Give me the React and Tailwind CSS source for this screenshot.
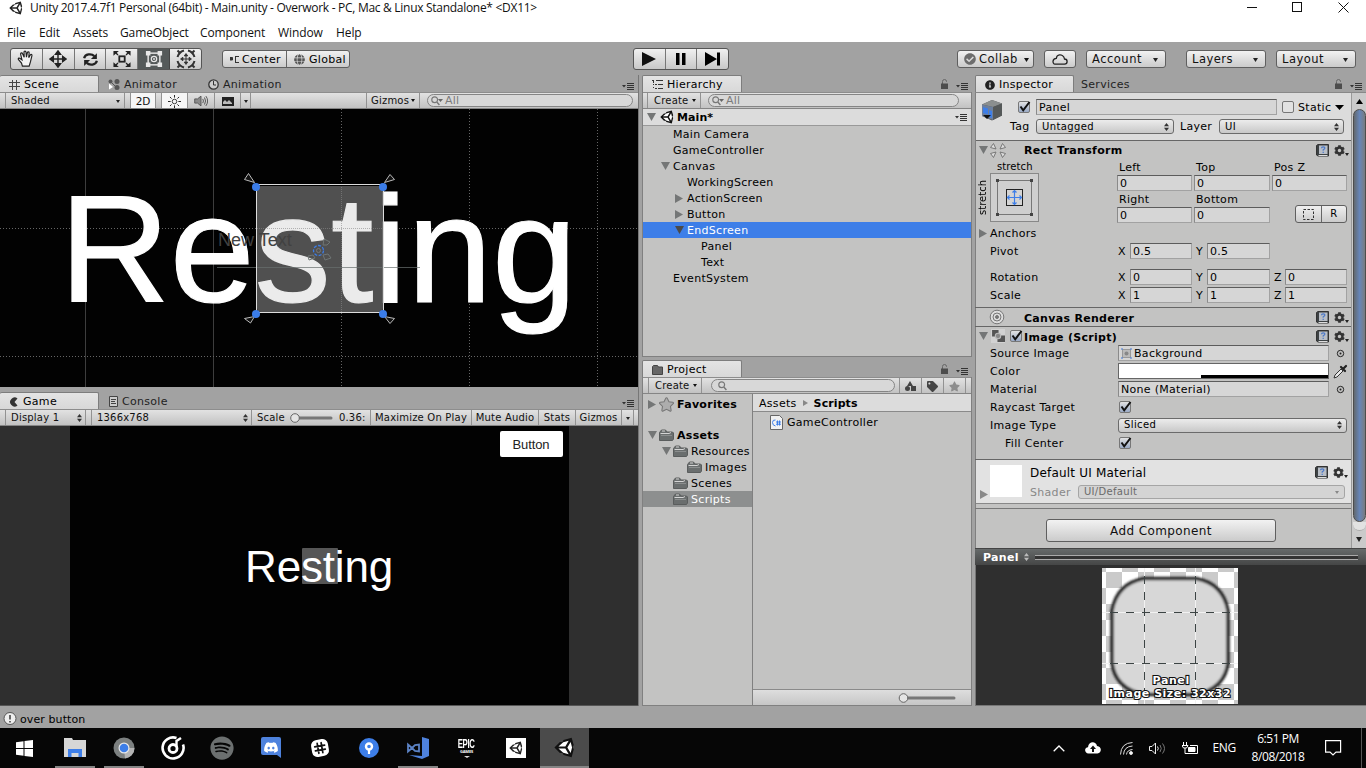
import React from "react";
import { FaSpotify, FaDiscord, FaStar, FaTag, FaCog, FaCheckCircle, FaInfoCircle, FaGlobe } from "react-icons/fa";

const Unity = ({ s = 14, className = "", inner = "#fff" }) => (
  <svg width={s} height={s} viewBox="0 0 24 25" className={"shrink-0 " + className}>
    <path fill="currentColor" d="M20.5 1 10.9 3.6 9.5 6.1H6.6L0 12.5 6.6 19h2.9l1.5 2.5 9.5 2.5 2.5-9.5-1.5-2.5L23 9.5z" />
    <path fill={inner} d="M4.8 11.2 10.5 6.2 17 4.6 13 11.2zM4.8 13.8l5.7 5 6.5 1.6-4-6.6zM19.3 6l1.7 6.5-1.7 6.5-3.9-6.5z" />
  </svg>
);
const Down = ({ className = "text-[#222]", w = 6, h = 4 }) => (
  <svg width={w} height={h} viewBox="0 0 6 4" preserveAspectRatio="none" className={"shrink-0 " + className}><path fill="currentColor" d="M0 0h6L3 4z" /></svg>
);
const Right = ({ className = "text-[#777]", w = 8, h = 9 }) => (
  <svg width={w} height={h} viewBox="0 0 8 9" preserveAspectRatio="none" className={"shrink-0 " + className}><path fill="currentColor" d="M0 0l8 4.5L0 9z" /></svg>
);
const Fold = ({ open, className = "text-[#747676]" }) => (open ? <Down w={9} h={8} className={className} /> : <Right className={className} />);
const UpDown = ({ className = "text-[#333]" }) => (
  <svg width="5" height="8" viewBox="0 0 5 8" className={"shrink-0 " + className}><path fill="currentColor" d="M0 3.200h5L2.500 0zM0 4.800h5L2.500 8z" /></svg>
);
const Lines = () => (
  <svg width="12" height="7" viewBox="0 0 12 7" className="shrink-0"><path fill="#333" d="M0 2h4L2 4.5zM5 0h7v1H5zM5 2h7v1H5zM5 4h7v1H5zM5 6h7v1H5z" /></svg>
);
const Folder = ({ w = 15, className = "" }) => (
  <svg width={w} height="12" viewBox="0 0 15 12" preserveAspectRatio="none" className={"shrink-0 " + className}>
    <path d="M.5 11.500v-8l2-2.500h4l1.500 2h5.500l1 1v6l-1 1.500z" fill="#6a6e6e" stroke="#5a5d5d" />
    <path d="M1.500 4.500h8.500l2-1M3 2h3" stroke="#d4d4d4" fill="none" /><path d="M2 6.500h11" stroke="#8a8d8d" />
  </svg>
);
const Search = ({ all }) => (
  <svg width="12" height="10" viewBox="0 0 12 10" className="shrink-0"><circle cx="3.7" cy="3.7" r="2.9" fill="none" stroke="#777" strokeWidth="1.2" /><path d="M5.8 6l2.6 3" stroke="#777" strokeWidth="1.4" />{all && <path d="M7 3h5l-2.5 3z" fill="#666" />}</svg>
);
const Svg = ({ s = 20, children, className = "" }) => <svg width={s} height={s} viewBox="0 0 20 20" fill="none" stroke="currentColor" className={"shrink-0 " + className}>{children}</svg>;
const Lock = () => (
  <svg width="7" height="10" viewBox="0 0 7 10" className="mr-px mb-px shrink-0"><path d="M1.500 5V2.500q0-2 2-2t2 2V3" fill="none" stroke="#666" /><path d="M0 4.500h7V10H0z" fill="#4d4d4d" /></svg>
);

const Tab = ({ icon, children, className = "" }) => (
  <div className={"flex h-[17px] items-center gap-[4px] rounded-t-[2px] border-t border-r border-[#7d7d7d] bg-linear-to-b from-[#e4e4e4] to-[#d8d8d8] pt-px pl-[9px] " + className}>{icon}<span>{children}</span></div>
);
const Ghost = ({ icon, children, className = "" }) => (
  <div className={"flex h-[17px] items-center gap-[4px] pt-[2px] text-[#222] " + className}>{icon}<span>{children}</span></div>
);
const Corner = ({ lock }) => (
  <div className="ml-auto flex items-end gap-[7px] pr-[4px] pb-[2px]">{lock && <Lock />}<Lines /></div>
);
const Bar = ({ children, className = "" }) => (
  <div className={"flex h-[17px] shrink-0 items-stretch border-t border-b border-t-[#8d8d8d] border-b-[#858585] bg-linear-to-b from-[#e2e2e2] to-[#c2c2c2] text-[10px] tracking-[0.2px] " + className}>{children}</div>
);
const Cell = ({ children, className = "" }) => <div className={"flex items-center border-r border-[#929292] pt-px whitespace-nowrap " + className}>{children}</div>;
const SearchBox = ({ all, className = "" }) => (
  <div className={"my-px flex items-center gap-[2px] rounded-full border border-[#858585] bg-[#d8d8d8] pl-[3px] text-[11px] text-[#7b7b7b] " + className}><Search all={all} />{all && "All"}</div>
);
const Btn = ({ children, className = "" }) => (
  <div className={"flex items-center rounded-[3px] border border-[#5f5f5f] bg-linear-to-b from-[#f2f2f2] to-[#cbcbcb] text-[#111] " + className}>{children}</div>
);
const Field = ({ children, className = "" }) => (
  <div className={"flex h-[16px] shrink-0 items-center border border-[#a2a2a2] border-t-[#5c5c5c] border-l-[#8a8a8a] bg-[#d6d6d6] pl-[2px] " + className}>{children}</div>
);
const Drop = ({ children, className = "" }) => (
  <div className={"flex h-[15px] shrink-0 items-center justify-between rounded-[3px] border border-[#6b6b6b] bg-linear-to-b from-[#ececec] to-[#c8c8c8] pr-[4px] pl-[5px] text-[10px] tracking-[0.4px] " + className}><span>{children}</span><UpDown /></div>
);
const Check = ({ off, className = "" }) => (
  <div className={"h-[12px] w-[12px] shrink-0 rounded-[2px] border border-[#777] bg-linear-to-b from-[#e2e2e2] " + (off ? "to-[#e2e2e2] " : "to-[#9aaac6] ") + className}>
    {!off && <svg width="12" height="11" viewBox="0 0 12 11" className="-mt-px"><path d="M1.5 5.5 4.2 9.300 10.500 1" fill="none" stroke="#111" strokeWidth="2" /></svg>}
  </div>
);
const BookGear = ({ className = "" }) => (
  <div className={"ml-auto flex items-center gap-[5px] " + className}>
    <svg width="13" height="13" viewBox="0 0 13 13"><path d="M.5 1.500 2 .5h10.500v11.500H2L.5 11z" fill="#3d4244" stroke="#333" /><rect x="3" y="1.500" width="8.500" height="8.500" fill="#b9bec6" /><path d="M5.500 4.200q0-1.400 1.700-1.400t1.700 1.300q0 1-1.700 1.700v1M7.200 7.800v1.200" fill="none" stroke="#4b79c9" strokeWidth="1.200" /><path d="M2.500 11.500h9" stroke="#ddd" /></svg>
    <div className="flex items-end"><FaCog size={11} className="text-[#333]" /><Down w={4} h={3} /></div>
  </div>
);

/* ---------- top ---------- */
const Title = () => (
  <header className="h-[42px] shrink-0 bg-white font-['Open_Sans',sans-serif] text-[12px] text-[#111]">
    <div className="flex h-[22px] items-start pt-px pl-[9px]">
      <Unity s={14} className="text-[#222]" />
      <span className="ml-[7px] -mt-px leading-[16px] whitespace-nowrap tracking-[-0.29px]">Unity 2017.4.7f1 Personal (64bit) - Main.unity - Overwork - PC, Mac &amp; Linux Standalone* &lt;DX11&gt;</span>
      <svg width="102" height="12" viewBox="0 0 102 12" className="mt-[1px] mr-[17px] ml-auto" fill="none" stroke="#111"><path d="M0 5.500h10M91.500 .5l10 10M101.500 .5l-10 10" /><rect x="45.500" y=".5" width="9" height="9" /></svg>
    </div>
    <nav className="flex items-center pt-px pl-[7px] leading-[20px] tracking-[-0.1px]">
      <span className="w-[32px]">File</span><span className="w-[34px]">Edit</span><span className="w-[47px]">Assets</span><span className="w-[80px]">GameObject</span><span className="w-[78px]">Component</span><span className="w-[58px]">Window</span><span>Help</span>
    </nav>
  </header>
);

const MoveP = "M10 3v14M3 10h14M10 1 7.200 4.800h5.600zM10 19 7.200 15.200h5.600zM1 10l3.800-2.800v5.600zM19 10l-3.800-2.800v5.600z";
const Toolbar = () => (
  <div className="flex h-[33px] shrink-0 items-start pt-[6px] pl-[10px]">
    <div className="flex h-[22px] w-[192px] overflow-hidden rounded-[3px] border border-[#555] bg-linear-to-b from-[#f0f0f0] to-[#c8c8c8] text-[#222]">
      <div className="flex flex-1 items-center justify-center border-r border-[#777]">
        <Svg s={18}><path fill="#f4f4f4" strokeWidth="1.300" d="M6 18 5 14.500 1.500 10.500c-.5-1.500 1-2 2-1L5.500 11 4 4.500c0-1.500 1.700-1.700 2.200-.3L8 8 7.800 2.500c0-1.600 2-1.600 2.200 0L10.500 8l1-5c.4-1.500 2.200-1.200 2 .3L13 8.500l1.800-3c.8-1.200 2.200-.4 1.800.8L15 13l-1.500 5z" /></Svg>
      </div>
      <div className="flex flex-1 items-center justify-center border-r border-[#777]"><Svg s={18}><path d={MoveP} strokeWidth="1.600" fill="currentColor" /></Svg></div>
      <div className="flex flex-1 items-center justify-center border-r border-[#777]"><Svg s={17}><path strokeWidth="2.600" d="M2.500 8.500C3.500 3.500 11 2.500 14.500 6M17.500 11.500C16.500 16.500 9 17.500 5.500 14" /><path fill="currentColor" stroke="none" d="M17.500 2.500v7h-7zM2.500 17.500v-7h7z" /></Svg></div>
      <div className="flex flex-1 items-center justify-center border-r border-[#777]"><Svg s={18}><rect x="7" y="7" width="6" height="6" strokeWidth="2" /><path strokeWidth="1.500" d="M5.500 5.500 2 2M14.500 5.500 18 2M5.500 14.500 2 18M14.500 14.500 18 18" /><path stroke="none" fill="currentColor" d="M.5 1v5.500L6.500 1zM19.500 1v5.500L13.500 1zM.5 19v-5.500L6.500 19zM19.500 19v-5.500L13.500 19z" /></Svg></div>
      <div className="flex flex-1 items-center justify-center border-r border-[#444] bg-[#555a5a] text-[#e8e8e8]"><Svg s={18}><rect x="3.500" y="3.500" width="13" height="13" strokeWidth="1.600" /><circle cx="10" cy="10" r="3" strokeWidth="1.300" /><circle cx="10" cy="10" r=".8" /><path fill="currentColor" stroke="none" d="M1 1h5v5H1zM14 1h5v5h-5zM1 14h5v5H1zM14 14h5v5h-5z" /></Svg></div>
      <div className="flex flex-1 items-center justify-center"><Svg s={20} className="text-[#333]"><path transform="translate(4 4) scale(.6)" d={MoveP} strokeWidth="1.600" fill="currentColor" /><path strokeWidth="2" d="M1.500 8Q3 3 8 1.500M12 1.500Q17 3 18.500 8M18.500 12Q17 17 12 18.500M8 18.500Q3 17 1.500 12" /><path strokeWidth="2" d="M4 4 1.500 1.500M16 4l2.500-2.500M4 16l-2.500 2.500M16 16l2.500 2.500" /></Svg></div>
    </div>
    <div className="mt-[2px] ml-[20px] flex h-[18px] w-[128px] rounded-[3px] border border-[#5f5f5f] bg-linear-to-b from-[#f0f0f0] to-[#cbcbcb]">
      <div className="flex w-[64px] items-center gap-[3px] border-r border-[#666] pl-[7px]"><svg width="9" height="7" viewBox="0 0 9 7"><path d="M0 1.500h2.500v2.500H0zM6 .5h3M6 6.500h3M5.500 0v7" fill="#333" stroke="#333" /></svg>Center</div>
      <div className="flex items-center gap-[4px] pl-[7px]"><FaGlobe size={11} className="text-[#555]" />Global</div>
    </div>
    <div className="ml-[283px] flex h-[22px] w-[96px] rounded-[3px] border border-[#555] bg-linear-to-b from-[#f0f0f0] to-[#c8c8c8] text-[#111]">
      <div className="flex flex-1 items-center justify-center border-r border-[#777]"><Right w={14} h={14} className="text-[#111]" /></div>
      <div className="flex flex-1 items-center justify-center border-r border-[#777]"><svg width="10" height="12"><path d="M0 0h3.500v12H0zM6 0h3.500v12H6z" /></svg></div>
      <div className="flex flex-1 items-center justify-center"><svg width="16" height="14"><path d="M0 0l12 7-12 7zM12 .5h3v13h-3z" /></svg></div>
    </div>
    <div className="mt-[2px] ml-[228px] flex text-[11.500px] leading-[13px] tracking-[0.5px]">
      <Btn className="h-[18px] w-[77px] gap-[3px] pt-px pl-[6px]"><FaCheckCircle size={12} className="mb-px text-[#6d6d6d]" />Collab<Down w={5} h={4} className="ml-[3px]" /></Btn>
      <Btn className="ml-[10px] h-[18px] w-[32px] justify-center"><svg width="16" height="11" viewBox="0 0 16 11"><path d="M3 10.200h9.500a2.600 2.600 0 0 0 0-5.200C12 2 9.500.6 7.500.8 5.500 1 4.500 2.500 4.300 4.300 0 4.500.3 10 3 10.200z" fill="none" stroke="#222" strokeWidth="1.300" /></svg></Btn>
      <Btn className="ml-[10px] h-[18px] w-[80px] justify-between pt-px pr-[7px] pl-[5px]">Account<Down w={5} h={4} /></Btn>
      <Btn className="ml-[20px] h-[18px] w-[80px] justify-between pt-px pr-[7px] pl-[5px]">Layers<Down w={5} h={4} /></Btn>
      <Btn className="ml-[10px] h-[18px] w-[80px] justify-between pt-px pr-[7px] pl-[5px]">Layout<Down w={5} h={4} /></Btn>
    </div>
  </div>
);

/* ---------- left column ---------- */
const SceneView = () => (
  <svg width="638" height="278" viewBox="0 109 638 278" className="block shrink-0 bg-[#020202] tracking-normal">
    <g stroke="#3d3d3d"><path d="M85.500 109v278M213.500 109v278" /><path strokeDasharray="1 2" stroke="#666" d="M341.500 109v278M469.500 109v278M597.500 109v278M0 228.500h638M0 356.500h638" /></g>
    <rect x="257" y="186" width="126" height="126" rx="4" fill="#575757" />
    <text x="59.500" y="302" fontSize="153" textLength="517.500" lengthAdjust="spacingAndGlyphs" fill="#fff" stroke="#fff" strokeWidth="1.200" fontFamily="Liberation Sans, Arial, sans-serif">Resting</text>
    <rect x="257" y="186" width="126" height="126" rx="4" fill="#000" opacity=".08" />
    <path d="M257 228.500h126M341.500 187v125" stroke="#8a8a8a" strokeDasharray="1 1" opacity=".6" />
    <path d="M217 267.500h203" stroke="#69706f" opacity=".7" />
    <text x="218" y="246" fontSize="18" fill="#414141" fontFamily="Liberation Sans, Arial, sans-serif">New Text</text>
    <rect x="256.500" y="184.500" width="127" height="128" fill="none" stroke="#ddd" />
    <g fill="#111" stroke="#bbb"><path d="M254.500 182.500l-10-3 4-6zM384.500 182.500l5.500-8 4.500 5zM254.500 316.500l-10 2 6 4.500zM384.500 316.500l10 2-4.500 5z" /></g>
    <g fill="#3b7de9"><circle cx="256" cy="187" r="4" /><circle cx="383" cy="187" r="4" /><circle cx="256" cy="314" r="4" /><circle cx="383" cy="314" r="4" /></g>
    <g fill="none"><circle cx="318.500" cy="250.500" r="5" stroke="#3b7de9" strokeWidth="1.300" strokeDasharray="3 1.500" /><circle cx="318.500" cy="250.500" r="2" stroke="#777" /><path stroke="#6f7675" d="M323 245l1-6 6 3-3 3zM323 255l5-1 3 4-6 2zM313 255l-5 1 1 4 6-2z" /></g>
  </svg>
);

const LeftCol = () => (
  <section className="flex w-[639px] flex-col border-r border-[#777]">
    <div className="flex h-[17px] items-end">
      <Tab className="w-[99px]" icon={<svg width="11" height="10"><path d="M3.500 0v10M7.500 0v10M0 2.500h11M0 6.500h11" stroke="#444" /></svg>}>Scene</Tab>
      <Ghost className="ml-[9px] w-[100px]" icon={<svg width="12" height="11" viewBox="0 0 12 11"><g fill="#555"><circle cx="2.500" cy="2.500" r="2" /><circle cx="9" cy="2.500" r="2.500" /><circle cx="9" cy="8.500" r="2.500" /></g><path d="M1 4.500v6l4-2.500z" fill="#fff" /><path d="M3 3l5 5" stroke="#555" /></svg>}>Animator</Ghost>
      <Ghost icon={<svg width="11" height="11"><circle cx="5.500" cy="5.500" r="4.700" fill="#ccc" stroke="#333" strokeWidth="1.300" /><path d="M5.500 2v4H8" fill="none" stroke="#333" /></svg>}>Animation</Ghost>
      <Corner />
    </div>
    <Bar className="text-[#111]">
      <Cell className="w-[6px]" />
      <Cell className="w-[119px] justify-between pr-[4px] pl-[5px]"><span>Shaded</span><Down w={4} h={3} /></Cell>
      <Cell className="w-[6px]" />
      <Cell className="w-[25px] justify-center bg-[#f6f6f6] text-[10.500px] tracking-[-0.1px]">2D</Cell>
      <Cell className="w-[6px]" />
      <Cell className="w-[26px] justify-center bg-[#f6f6f6]"><Svg s={13} className="text-[#222]"><circle cx="10" cy="10" r="3.500" fill="none" strokeWidth="1.300" /><path strokeWidth="1.500" d="M10 0v4M10 16v4M0 10h4M16 10h4M3 3l2.500 2.500M14.500 14.500 17 17M3 17l2.500-2.500M14.500 5.500 17 3" /></Svg></Cell>
      <Cell className="w-[27px] justify-center"><Svg s={14} className="text-[#555]"><path fill="#8a8a8a" strokeWidth="1.300" d="M1 7h4l5-4v14l-5-4H1z" /><path strokeWidth="1.400" d="M12.500 7q2 3 0 6M15 5q3 5 0 10M17 3q5 7 0 14" /></Svg></Cell>
      <Cell className="w-[26px] justify-center"><svg width="12" height="9"><path fill="#222" d="M0 0h12v9H0z" /><path fill="#bbb" d="M1 7V5l2-2 2 2 2-2 3 3v1z" /></svg></Cell>
      <Cell className="w-[10px] justify-center"><Down w={4} h={3} /></Cell>
      <div className="w-[115px]" />
      <Cell className="w-[54px] justify-between border-l pr-[4px] pl-[4px]"><span>Gizmos</span><Down w={4} h={3} className="mb-[2px]" /></Cell>
      <SearchBox all className="ml-[7px] w-[206px]" />
    </Bar>
    <SceneView />
    <div className="mt-[5px] flex h-[17px] shrink-0 items-end border-t border-t-[#a2a2a2]">
      <Tab className="w-[99px]" icon={<svg width="10" height="10"><path d="M8.500 1.500A4.500 4.500 0 1 0 8.500 8.500L5.500 5z" fill="#333" /></svg>}>Game</Tab>
      <Ghost className="ml-[10px]" icon={<svg width="9" height="11"><path d="M.5.500h8v10h-8zM2 3.500h5M2 5.500h4M2 7.500h5" fill="#ccc" stroke="#444" /></svg>}>Console</Ghost>
      <Corner />
    </div>
    <Bar className="text-[#111]">
      <Cell className="w-[6px]" />
      <Cell className="w-[80px] justify-between pr-[3px] pl-[5px]"><span>Display 1</span><UpDown /></Cell>
      <Cell className="w-[6px]" />
      <Cell className="w-[160px] justify-between pr-[3px] pl-[5px]"><span>1366x768</span><UpDown /></Cell>
      <Cell className="w-[119px] pt-[2px] pl-[5px]"><span>Scale</span><svg width="43" height="12" viewBox="0 0 43 12" className="ml-[5px]"><path d="M6 6h35" stroke="#777" strokeWidth="3" strokeLinecap="round" /><circle cx="5" cy="6" r="4.300" fill="#e4e4e4" stroke="#666" /></svg><span className="ml-[6px]">0.36:</span></Cell>
      <Cell className="w-[101px] justify-center">Maximize On Play</Cell>
      <Cell className="w-[67px] justify-center">Mute Audio</Cell>
      <Cell className="w-[37px] justify-center">Stats</Cell>
      <Cell className="w-[46px] justify-center">Gizmos</Cell>
      <Cell className="w-[12px] justify-center"><Down w={4} h={3} /></Cell>
    </Bar>
    <div className="flex h-[280px] justify-center border-b border-[#555] bg-[#2f2f2f]">
      <div className="relative w-[499px] bg-[#020202] font-['Liberation_Sans',Arial,sans-serif]">
        <div className="absolute top-[5px] left-[430px] flex h-[26px] w-[63px] items-center justify-center rounded-[2px] bg-white text-[13px] tracking-[-0.1px] text-[#222]">Button</div>
        <div className="absolute top-[122px] left-[232px] h-[36px] w-[36px] rounded-[1px] bg-[#565656]" />
        <div className="absolute top-[115px] left-[175.500px] text-[44px] leading-[51px] tracking-[-0.15px] text-white">Resting</div>
      </div>
    </div>
  </section>
);

/* ---------- middle column ---------- */
const Item = ({ pad, open, sel, children }) => (
  <div className={"flex h-[16px] items-center " + (sel ? "bg-[#3d7ee8] text-white " : "") + pad}>
    <div className="flex w-[12px] shrink-0">{open !== undefined && <Fold open={open} className={sel ? "text-[#4a4a4a]" : "text-[#747676]"} />}</div>
    <span>{children}</span>
  </div>
);
const Tree = ({ pad, open, sel, children, bold, icon }) => (
  <div className={"flex h-[16px] items-center whitespace-nowrap " + (sel ? "bg-[#8d8f8f] text-white " : "") + pad}>
    <div className="flex w-[11px] shrink-0">{open !== undefined && <Fold open={open} />}</div>
    {icon || <Folder />}
    <span className={bold ? "ml-[3px] font-bold" : "ml-[3px]"}>{children}</span>
  </div>
);

const MidCol = () => (
  <section className="ml-[3px] flex w-[330px] flex-col">
    <div className="flex h-[17px] items-end">
      <Tab className="w-[100px] border-l pl-[8px]" icon={<svg width="11" height="9"><path d="M0 .5h2M4 .5h7M3 4.500h2M6 4.500h5M3 8.500h2M6 8.500h5M1.500 1v2M1.500 4v1M1.500 7v1" stroke="#333" /></svg>}>Hierarchy</Tab>
      <Corner lock />
    </div>
    <div className="flex h-[265px] flex-col border-x border-b border-[#808080] bg-[#c3c3c2]">
      <Bar className="text-[#111]">
        <Cell className="w-[5px]" /><Cell className="w-[53px] justify-between pr-[4px] pl-[6px]"><span>Create</span><Down w={4} h={3} className="mb-[2px]" /></Cell>
        <SearchBox all className="ml-[7px] w-[251px]" />
      </Bar>
      <div className="flex h-[17px] items-center border-b border-[#999] bg-[#dcdcdc] pr-[4px] pl-[4px]"><Fold open /><Unity s={14} className="mr-[3px] ml-[4px] text-[#111]" /><b className="pt-px tracking-[0.1px]">Main*</b><div className="ml-auto"><Lines /></div></div>
      <Item pad="pl-[18px]">Main Camera</Item>
      <Item pad="pl-[18px]">GameController</Item>
      <Item pad="pl-[18px]" open>Canvas</Item>
      <Item pad="pl-[32px]">WorkingScreen</Item>
      <Item pad="pl-[32px]" open={false}>ActionScreen</Item>
      <Item pad="pl-[32px]" open={false}>Button</Item>
      <Item pad="pl-[32px]" open sel>EndScreen</Item>
      <Item pad="pl-[46px]">Panel</Item>
      <Item pad="pl-[46px]">Text</Item>
      <Item pad="pl-[18px]">EventSystem</Item>
    </div>
    <div className="mt-[3px] flex h-[17px] shrink-0 items-end">
      <Tab className="w-[100px] border-l pl-[8px]" icon={<svg width="11" height="10"><path d="M.5 9.500v-8l1-1h4l1 1.500h4v7.500z" fill="#666" stroke="#444" /></svg>}>Project</Tab>
      <Corner lock />
    </div>
    <div className="flex h-[329px] flex-col border-x border-b border-[#808080]">
      <Bar className="text-[#111]">
        <Cell className="w-[6px]" /><Cell className="w-[53px] justify-between pr-[4px] pl-[6px]"><span>Create</span><Down w={4} h={3} className="mb-[2px]" /></Cell>
        <SearchBox className="ml-[9px] w-[184px] pl-[6px]" />
        <Cell className="w-[5px]" />
        <Cell className="w-[22px] justify-center"><svg width="11" height="10" fill="#444"><path d="M5 0l3 5H2z" /><circle cx="2.500" cy="7.500" r="2.500" /><path d="M6 5h5v5H6z" /></svg></Cell>
        <Cell className="w-[22px] justify-center"><FaTag size={11} className="text-[#444]" /></Cell>
        <Cell className="w-[22px] justify-center"><FaStar size={11} className="text-[#8c8c8c]" /></Cell>
      </Bar>
      <div className="flex min-h-0 flex-1">
        <div className="w-[110px] shrink-0 overflow-hidden border-r border-[#808080] bg-[#c3c3c2] pt-[2px]">
          <Tree pad="pl-[5px]" open={false} bold icon={<FaStar size={15} className="text-[#adadad]" stroke="#777" strokeWidth="40" />}>Favorites</Tree>
          <div className="h-[15px]" />
          <Tree pad="pl-[5px]" open bold>Assets</Tree>
          <Tree pad="pl-[19px]" open>Resources</Tree>
          <Tree pad="pl-[33px]">Images</Tree>
          <Tree pad="pl-[19px]">Scenes</Tree>
          <Tree pad="pl-[19px]" sel>Scripts</Tree>
        </div>
        <div className="flex flex-1 flex-col bg-[#c3c3c2]">
          <div className="flex h-[18px] shrink-0 items-center gap-[6px] border-b border-[#8a8a8a] bg-[#dcdcdc] pt-px pl-[6px]"><span>Assets</span><Right w={5} h={6} className="text-[#888]" /><b className="tracking-[0.1px]">Scripts</b></div>
          <div className="mt-[2px] flex h-[16px] items-center gap-[4px] pl-[17px]"><svg width="13" height="15" viewBox="0 0 13 15"><path d="M.5.500h9l3 3v11H.5z" fill="#f1f1f1" stroke="#666" /><path d="M5.500 5Q2.500 4.500 2.500 7.500T5.500 11M7.500 5.500v5M9.500 5.500v5M6 7h5M6 9.200h5" stroke="#3d7ee8" fill="none" /></svg>GameController</div>
          <div className="mt-auto flex h-[16px] items-center border-t border-[#8a8a8a] bg-linear-to-b from-[#dedede] to-[#c6c6c6]"><svg width="58" height="12" className="ml-auto mr-[15px]"><path d="M6 6h50" stroke="#777" strokeWidth="3" strokeLinecap="round" /><circle cx="5.500" cy="6" r="4.300" fill="#e4e4e4" stroke="#666" /></svg></div>
        </div>
      </div>
    </div>
  </section>
);

/* ---------- inspector ---------- */
const Vec = ({ label, v }) => (
  <div className="flex h-[18px] items-center">
    <span className="w-[142px] pl-[15px]">{label}</span>
    <span className="w-[13px] pl-px">X</span><Field className="w-[62px]">{v[0]}</Field>
    <span className="w-[15px] pl-[4px]">Y</span><Field className="w-[63px]">{v[1]}</Field>
    {v[2] && <><span className="w-[15px] pl-[4px]">Z</span><Field className="w-[62px]">{v[2]}</Field></>}
  </div>
);
const Prop = ({ label, children, pad = "pl-[15px]" }) => (
  <div className="flex h-[18px] items-center"><span className={"w-[143px] shrink-0 " + pad}>{label}</span>{children}</div>
);
const Target = () => <svg width="9" height="9" className="ml-[7px]"><circle cx="4.500" cy="4.500" r="3.200" fill="none" stroke="#222" /><circle cx="4.500" cy="4.500" r="1" fill="#222" /></svg>;

const Inspector = () => (
  <section className="ml-[3px] flex flex-1 flex-col">
    <div className="flex h-[17px] items-end">
      <Tab className="w-[99px] border-l pl-[8px]" icon={<FaInfoCircle size={10} className="text-[#222]" />}>Inspector</Tab>
      <Ghost className="ml-[7px]">Services</Ghost>
      <Corner lock />
    </div>
    <div className="flex h-[456px] shrink-0 border-t border-[#888]">
      <div className="w-[376px] bg-[#c3c3c2] shadow-[inset_1px_0_0_#808080]">
        <div className="ml-px h-[48px] border-b border-[#666] bg-[#dcdcdc] pt-[6px]">
          <div className="flex h-[16px] items-center">
            <svg width="24" height="26" viewBox="0 0 24 26" className="mt-[8px] mr-[13px] ml-[5px] shrink-0"><path d="M11 2 21 5.500v12l-10 5L1 18V6.500z" fill="#555" /><path d="M11 2 21 5.500l-9 3.500L1 6.500z" fill="#8b8f8f" /><path d="M1 6.500 12 9v13L1 18z" fill="#6d7f9c" /><path d="M2 9l5 1.500v6L2 15zM8 12l3 1v7l-3-1z" fill="#3d7ee8" /><path d="M12 9l9-3.500v12L12 22z" fill="#555959" /><path d="M2 17h8l-4 4z" fill="#111" /></svg>
            <Check />
            <Field className="ml-[6px] w-[241px]">Panel</Field>
            <Check off className="ml-[5px]" /><span className="ml-[4px]">Static</span><Down w={9} h={5} className="ml-[4px]" />
          </div>
          <div className="mt-[4px] flex h-[15px] items-center"><span className="w-[60px] pl-[34px]">Tag</span><Drop className="w-[138px]">Untagged</Drop><span className="w-[45px] pl-[6px]">Layer</span><Drop className="w-[125px]">UI</Drop></div>
        </div>
        <div className="h-[167px] border-b border-[#666]">
          <div className="flex h-[18px] items-center pr-[2px] pl-[4px]"><Fold open /><svg width="18" height="17" viewBox="0 0 18 17" className="ml-[1px]" fill="#ddd" stroke="#777"><path d="M7 7 1.500 5.500 4.500 1.500zM11 7l5.500-1.500-3-4zM7 10l-5.500 1.500 3 4zM11 10l5.500 1.500-3 4z" strokeLinejoin="round" /></svg><b className="ml-[17px] pt-px">Rect Transform</b><BookGear /></div>
          <div className="flex h-[64px]">
            <div className="w-[142px]">
              <div className="h-[14px] pt-px pl-[22px] text-[10px] leading-[14px] tracking-[0.1px]">stretch</div>
              <div className="flex">
                <div className="flex w-[15px] items-center justify-center pl-px text-[10px] tracking-normal"><span className="rotate-180 [writing-mode:vertical-rl]">stretch</span></div>
                <svg width="49" height="49" viewBox="0 0 49 49"><rect x=".5" y=".5" width="48" height="48" fill="#cfcfcf" stroke="#888" /><rect x="7.500" y="7.500" width="34" height="34" fill="none" stroke="#777" /><path fill="#444" d="M6 6h3v3H6zM40 6h3v3h-3zM6 40h3v3H6zM40 40h3v3h-3z" /><rect x="16.500" y="16.500" width="16" height="16" fill="#d4d4d4" stroke="#222" /><path d="M24.500 18v13M18 24.500h13M22.500 19.500l2-2 2 2M22.500 29.500l2 2 2-2M19.500 22.500l-2 2 2 2M29.500 22.500l2 2-2 2" stroke="#3d7ee8" fill="none" strokeWidth="1.200" /></svg>
              </div>
            </div>
            <div className="flex flex-col">
              <div className="flex h-[16px] items-center"><span className="w-[77px] pl-[2px]">Left</span><span className="w-[78px] pl-[2px]">Top</span><span className="pl-[2px]">Pos Z</span></div>
              <div className="flex gap-[2px]"><Field className="w-[75px]">0</Field><Field className="w-[76px]">0</Field><Field className="w-[75px]">0</Field></div>
              <div className="flex h-[16px] items-center"><span className="w-[77px] pl-[2px]">Right</span><span className="pl-[2px]">Bottom</span></div>
              <div className="flex gap-[2px]"><Field className="w-[75px]">0</Field><Field className="w-[76px]">0</Field>
                <div className="-mt-[2px] ml-[23px] flex h-[18px] w-[52px] rounded-[3px] border border-[#5f5f5f] bg-linear-to-b from-[#f0f0f0] to-[#cbcbcb] text-[10px]"><div className="flex flex-1 items-center justify-center border-r border-[#666]"><svg width="11" height="11"><rect x=".5" y=".5" width="10" height="10" fill="none" stroke="#333" strokeDasharray="2.500 1.500" /></svg></div><div className="flex flex-1 items-center justify-center">R</div></div>
              </div>
            </div>
          </div>
          <div className="mt-px flex h-[18px] items-center pl-[4px]"><Fold open={false} /><span className="ml-[3px]">Anchors</span></div>
          <Vec label="Pivot" v={["0.5", "0.5"]} />
          <div className="h-[8px]" />
          <Vec label="Rotation" v={["0", "0", "0"]} />
          <Vec label="Scale" v={["1", "1", "1"]} />
        </div>
        <div className="flex h-[19px] items-center border-b border-[#666] pr-[2px] pl-[14px]"><svg width="16" height="16" fill="none" stroke="#777"><circle cx="8" cy="8" r="6.800" fill="#ddd" /><circle cx="8" cy="8" r="4" /><circle cx="8" cy="8" r="1.500" fill="#777" /></svg><b className="ml-[19px] pt-[2px]">Canvas Renderer</b><BookGear /></div>
        <div className="h-[133px] border-b border-[#666]">
          <div className="flex h-[17px] items-center pt-px pr-[2px] pl-[4px]"><Fold open /><svg width="14" height="14" viewBox="0 0 13 13" className="ml-[3px]"><rect width="13" height="13" fill="#d2d2d2" /><path d="M1 1h6v6H1zM6 6h7v6H6z" fill="#555" /><circle cx="6.500" cy="6.500" r="2.500" fill="#888" stroke="#bbb" /></svg><Check className="ml-[5px]" /><b className="ml-[2px] pt-[2px]">Image (Script)</b><BookGear /></div>
          <Prop label="Source Image"><Field className="w-[211px]"><svg width="11" height="11" className="mr-[2px]"><rect x="1.500" y="1.500" width="8" height="8" fill="#bbb" stroke="#999" /><path fill="#5a87d6" d="M0 0h2v2H0zM9 0h2v2H9zM0 9h2v2H0zM9 9h2v2H9z" opacity=".6" /><circle cx="5.500" cy="5.500" r="2" fill="#888" /></svg>Background</Field><Target /></Prop>
          <Prop label="Color"><div className="flex h-[16px] w-[211px] flex-col justify-end border border-[#666] bg-white"><div className="ml-[82px] h-[3px] bg-black" /></div><svg width="15" height="15" viewBox="0 0 15 15" className="ml-[4px]"><path d="M1 14l1-3 6-6 2 2-6 6z" fill="#e8e8e8" stroke="#333" /><path d="M8 3l4 4M10 5l3-3" stroke="#222" strokeWidth="2.200" strokeLinecap="round" /></svg></Prop>
          <Prop label="Material"><Field className="w-[211px]">None (Material)</Field><Target /></Prop>
          <Prop label="Raycast Target"><Check className="ml-px" /></Prop>
          <Prop label="Image Type"><Drop className="w-[229px]">Sliced</Drop></Prop>
          <Prop label="Fill Center" pad="pl-[30px]"><Check className="ml-px" /></Prop>
        </div>
        <div className="ml-px flex h-[44px] border-b border-[#888] bg-[#e2e2e2]">
          <div className="flex w-[14px] items-end pb-[4px] pl-[4px]"><Right w={8} h={9} className="text-[#888]" /></div>
          <div className="mt-[5px] h-[32px] w-[32px] bg-white" />
          <div className="flex flex-1 flex-col pl-[8px]">
            <div className="flex h-[25px] items-center pr-[3px] text-[12px] tracking-[0.2px]">Default UI Material<BookGear /></div>
            <div className="flex items-center text-[#888]"><span className="w-[48px]">Shader</span><div className="flex h-[14px] w-[267px] items-center justify-between rounded-[3px] border border-[#a5a5a5] bg-[#d4d4d4] pr-[5px] pl-[5px] text-[10px] text-[#6a6a6a]"><span>UI/Default</span><Down w={4} h={3} className="text-[#888]" /></div></div>
          </div>
        </div>
        <div className="mt-[4px] border-t border-[#777] pt-[10px] pl-[71px]"><Btn className="h-[23px] w-[230px] justify-center text-[12px] leading-[12px] tracking-[0.4px]">Add Component</Btn></div>
      </div>
      <div className="flex flex-1 flex-col items-center border-l border-[#999] bg-[#cacaca]">
        <div className="flex h-[16px] items-center"><Down w={7} h={5} className="rotate-180" /></div>
        <div className="w-[13px] flex-1 rounded-full border border-[#4d4d4d] bg-linear-to-r from-[#63696f] via-[#6685b8] to-[#787b80]" />
        <div className="h-[9px] w-[13px] rounded-b-full border-b border-[#aaa] bg-[#e2e2e2]" />
        <div className="flex h-[17px] items-center"><Down w={6} h={5} /></div>
      </div>
    </div>
    <div className="flex h-[17px] shrink-0 items-center border-t border-[#444] bg-linear-to-b from-[#666a6a] to-[#454646] pl-[8px] text-white"><b>Panel</b><UpDown className="ml-[5px] text-[#bbb]" /><div className="mr-[8px] ml-[6px] h-[5px] flex-1 border-y border-[#aaa] bg-[#333]" /></div>
    <div className="flex h-[141px] justify-center border-b border-l border-[#777] bg-[#2f2f2f] pt-[3px] pr-[3px]">
      <svg width="136" height="136" viewBox="0 0 136 136">
        <defs>
          <pattern id="chk" x="4" y="4" width="32" height="32" patternUnits="userSpaceOnUse"><rect width="32" height="32" fill="#fff" /><path d="M0 0h16v16H0zM16 16h16v16H16z" fill="#cacaca" /></pattern>
          <filter id="soft" x="-10%" y="-10%" width="120%" height="120%"><feGaussianBlur stdDeviation="1.300" /></filter>
        </defs>
        <rect width="136" height="136" fill="url(#chk)" />
        <path d="M42 10.500h52q27 5 32 32v52q-3 26-32 32H42q-29-6-32-32v-52q5-27 32-32z" fill="#d7d7d7" stroke="#222" strokeWidth="3.500" filter="url(#soft)" />
        <g fill="none"><path stroke="#f2f2f2" d="M42.500 0v136M93.500 0v136M0 44.500h136M0 95.500h136" /><path stroke="#3c4444" strokeDasharray="8 8" d="M42.500 8v120M93.500 8v120M8 44.500h120M8 95.500h120" /></g>
        <g fill="#fff" stroke="#111" strokeWidth="2.200" paintOrder="stroke" fontFamily="DejaVu Sans, sans-serif" fontSize="11" fontWeight="bold" textAnchor="middle"><text x="69" y="116" textLength="37">Panel</text><text x="68" y="129" textLength="122">Image Size: 32x32</text></g>
      </svg>
    </div>
  </section>
);

/* ---------- bottom ---------- */
const Slot = ({ children, line, active }) => (
  <div className={"flex w-[49px] flex-col items-center " + (active ? "bg-[#4b4b4b]" : "")}>
    <div className="flex h-[38px] items-center justify-center pt-px">{children}</div>
    {line && <div className={(active ? "w-[49px]" : "w-[40px]") + " h-[2px] bg-[#858585]"} />}
  </div>
);
const Taskbar = () => (
  <footer className="flex h-[40px] shrink-0 bg-[#060606] font-['Open_Sans',sans-serif] text-[12px] tracking-[-0.2px] text-white">
    <div className="flex w-[50px] items-center justify-center pr-[2px]"><svg width="17" height="17" viewBox="0 0 17 17" fill="#fff"><path d="M0 2.300 7.500 1.300V8H0zM8.500 1.100 17 0v8H8.500zM0 9h7.500v6.700L0 14.700zM8.500 9H17v8l-8.500-1.100z" /></svg></div>
    <Slot line><svg width="22" height="19"><path d="M0 0h8l1 2h13v17H0z" fill="#d6d6d6" /><path d="M4 19v-8h14v8h-3.500v-4h-7v4z" fill="#3d7ee8" /></svg></Slot>
    <Slot line><svg width="22" height="22"><circle cx="11" cy="11" r="10.500" fill="#7c8080" /><path d="M11 11h10.500A10.500 10.500 0 0 1 12 21.500z" fill="#b4b4b4" /><circle cx="11" cy="11" r="5.500" fill="#e8e8e8" /><circle cx="11" cy="11" r="4.300" fill="#3d7ee8" /></svg></Slot>
    <Slot><svg width="24" height="24" fill="none" stroke="#fff"><path d="M15.500 2A10.500 10.500 0 1 0 22 8.500" strokeWidth="2.600" /><circle cx="12" cy="12.500" r="4" strokeWidth="2.800" /><path d="M15.500 11V5l4.500-3" strokeWidth="2.400" /></svg></Slot>
    <Slot><FaSpotify size={24} className="text-[#6c7070]" /></Slot>
    <Slot><svg width="20" height="21"><path d="M2 0h16q2 0 2 2v19l-4-3H2q-2 0-2-2V2Q0 0 2 0z" fill="#4e82dd" /><g transform="translate(2.500 3)"><FaDiscord size={15} color="#fff" /></g></svg></Slot>
    <Slot><svg width="20" height="20" viewBox="0 0 20 20"><g transform="rotate(-10 10 10)"><rect x="1.500" y="1.500" width="17" height="17" rx="5.500" fill="#fff" /><path d="M8 5v10M12 5v10M5 8h10M5 12h10" stroke="#111" strokeWidth="1.700" strokeLinecap="round" /></g></svg></Slot>
    <Slot><svg width="22" height="22"><circle cx="11" cy="11" r="10" fill="#3d7ee8" /><circle cx="11" cy="9.500" r="3" fill="none" stroke="#fff" strokeWidth="2.400" /><path d="M11 12.500V17" stroke="#fff" strokeWidth="2.200" /></svg></Slot>
    <Slot line><svg width="24" height="24" viewBox="0 0 24 24"><path d="M16 1l7 2v17l-7 3L3 19l13 1z" fill="#4e82dd" /><path d="M2 8.500v7l4-3.500 3-3 4-.5v7l-4-.5-3-3z" fill="none" stroke="#5b82c4" strokeWidth="1.800" /></svg></Slot>
    <Slot><div className="flex flex-col items-center leading-none"><span className="scale-x-[0.6] font-['Liberation_Sans',sans-serif] text-[13px] leading-[11px] font-bold tracking-[-0.5px]">EPIC</span><span className="text-[4px] leading-[5px] font-bold">GAMES</span><svg width="6" height="2" className="mt-[2px]"><path d="M0 0h6L3 2z" fill="#ddd" /></svg></div></Slot>
    <Slot><div className="flex h-[20px] w-[20px] items-center justify-center bg-white"><Unity s={14} className="text-[#222]" /></div></Slot>
    <Slot line active><Unity s={21} className="text-[#111]" inner="#fff" /></Slot>
    <div className="ml-auto flex items-center">
      <svg width="12" height="7"><path d="M.7 6.300 6 1l5.300 5.300" fill="none" stroke="#fff" strokeWidth="1.300" /></svg>
      <svg width="16" height="12" viewBox="0 0 16 12" className="ml-[20px]"><path d="M3.500 11.500C-1 11-.8 5.500 3 5.300 3.500-1 11-1.200 12 4c5 .3 5 7 .5 7.500z" fill="#fff" /><path d="M8 3.500 5 7h2v3h2V7h2z" fill="#111" /></svg>
      <svg width="13" height="13" viewBox="0 0 13 13" fill="none" stroke="#ddd" className="ml-[19px]"><path d="M.5 12.500Q1 1 12.500.5M3.500 12.500Q4 4.500 12.500 4M6.500 12.500Q7 8 12.500 7.500" /><circle cx="11" cy="11" r="1.500" fill="#fff" /></svg>
      <svg width="17" height="13" viewBox="0 0 17 13" fill="none" stroke="#eee" className="ml-[16px]"><path d="M.5 4.500h2.500L6.500 1v11L3 8.500H.5z" /><path d="M8.500 4.500q1.500 2 0 4" /><path stroke="#777" d="M11 3q2.500 3.500 0 7M13.500 1.500q4 5 0 10" /></svg>
      <svg width="16" height="12" viewBox="0 0 16 12" className="ml-[16px]"><path d="M6.500 5.500h6.500v4H6.500z" fill="#fff" stroke="#fff" /><path d="M1.500 0v3M4.500 0v3M0 3.500h6L4.500 6h-3zM3 6v5.500h12.500v-8H8" stroke="#fff" fill="none" /></svg>
      <span className="ml-[14px] tracking-[-0.3px]">ENG</span>
      <div className="ml-[16px] flex w-[52px] flex-col items-center text-[12px] leading-[18px] tracking-[-0.45px] whitespace-nowrap"><span>6:51 PM</span><span>8/08/2018</span></div>
      <svg width="17" height="16" className="ml-[21px]" fill="none" stroke="#fff" strokeWidth="1.200"><path d="M.6.600h15v11.500H11L8 15l-3-2.900H.6z" /></svg>
      <div className="ml-[19px] h-[40px] w-px bg-[#555]" /><div className="w-[4px]" />
    </div>
  </footer>
);

export default function App() {
  return (
    <div className="flex h-[768px] w-[1366px] flex-col overflow-hidden bg-[#a2a2a2] font-['DejaVu_Sans',Verdana,sans-serif] text-[11px] leading-none tracking-[0.3px] text-black">
      <Title />
      <Toolbar />
      <main className="flex h-[631px] shrink-0"><LeftCol /><MidCol /><Inspector /></main>
      <div className="flex h-[22px] shrink-0 items-center gap-[3px] pt-[4px] pl-[3px] tracking-[0.1px]">
        <svg width="14" height="14"><circle cx="7" cy="6.500" r="6" fill="#eee" stroke="#555" /><path d="M7 3v4.500M7 9v1.500" stroke="#444" strokeWidth="1.600" /></svg>over button
      </div>
      <Taskbar />
    </div>
  );
}
